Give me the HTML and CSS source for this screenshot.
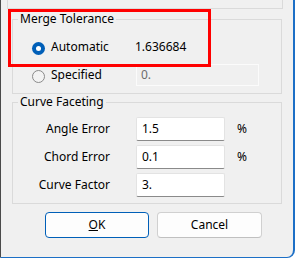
FILE: index.html
```html
<!DOCTYPE html>
<html>
<head>
<meta charset="utf-8">
<link rel="stylesheet" href="styles.css">
</head>
<body>
<div class="window">
  <div class="top-box"></div>
  <fieldset class="group merge">
    <legend>Merge Tolerance</legend>
    <div class="merge-grid">
      <div class="radio-row"><span class="radio on"></span><span>Automatic</span></div>
      <span class="value">1.636684</span>
      <div class="radio-row"><span class="radio off"></span><span>Specified</span></div>
      <div class="edit disabled">0.</div>
    </div>
  </fieldset>
  <fieldset class="group curve">
    <legend>Curve Faceting</legend>
    <div class="curve-grid">
      <span class="lbl">Angle Error</span><div class="edit">1.5</div><span class="unit">%</span>
      <span class="lbl">Chord Error</span><div class="edit">0.1</div><span class="unit">%</span>
      <span class="lbl">Curve Factor</span><div class="edit">3.</div><span class="unit"></span>
    </div>
  </fieldset>
  <div class="buttons">
    <button class="btn default"><u>O</u>K</button>
    <button class="btn">Cancel</button>
  </div>
  <div class="highlight"></div>
</div>
</body>
</html>
```
FILE: styles.css
```css
html, body {
  margin: 0;
  padding: 0;
  background: #ffffff;
}

.window {
  position: relative;
  width: 295px;
  height: 258px;
  box-sizing: border-box;
  background: #f0f0f0;
  border-left: 1px solid #4a4a4a;
  border-right: 2px solid #1c6fc6;
  border-bottom: 1px solid #1c6fc6;
  border-bottom-right-radius: 8px;
  font: 12px/16px "Noto Sans", sans-serif;
  color: #000;
  display: flex;
  flex-direction: column;
  overflow: hidden;
}

.top-box {
  margin-left: 6px;
  width: 276px;
  height: 9px;
  box-sizing: border-box;
  border: 1px solid #dadada;
  border-top: none;
  flex: none;
}

.group {
  margin: 0 0 0 11px;
  padding: 0;
  width: 270px;
  box-sizing: border-box;
  border: 1px solid #dadada;
  min-width: 0;
  flex: none;
}

.group legend {
  margin-left: 5px;
  padding: 0 2px;
  line-height: 16px;
}

.merge {
  margin-top: 2px;
}

.merge-grid {
  display: grid;
  grid-template-columns: 103px 124px;
  grid-template-rows: 24px 22px;
  row-gap: 5px;
  padding: 8px 0 7px 19px;
  align-items: center;
}

.radio-row {
  display: flex;
  align-items: center;
  gap: 6px;
}

.radio {
  width: 13px;
  height: 13px;
  box-sizing: border-box;
  border-radius: 50%;
  flex: none;
}

.radio.on {
  background: #005fb8;
  position: relative;
  margin-top: 3px;
}

.radio.on::after {
  content: "";
  position: absolute;
  left: 4px;
  top: 4px;
  width: 5px;
  height: 5px;
  border-radius: 50%;
  background: #fff;
}

.radio.off {
  border: 1px solid #8a8a8a;
  background: #f3f3f3;
  margin-top: 2px;
}

.value {
  padding-left: 0;
}

.edit {
  height: 24px;
  box-sizing: border-box;
  background: #fff;
  border: 1px solid #e3e3e3;
  border-bottom-color: #8a8a8a;
  border-radius: 2px;
  padding-left: 5px;
  line-height: 22px;
}

.edit.disabled {
  height: 22px;
  margin-left: 1px;
  background: transparent;
  border: 1px solid #fbfbfb;
  border-radius: 0;
  color: #6d6d6d;
  padding-left: 4px;
  line-height: 20px;
}

.curve-grid {
  display: grid;
  grid-template-columns: 97px 89px auto;
  grid-auto-rows: 24px;
  column-gap: 26px;
  row-gap: 4px;
  padding: 7px 0 6px 0;
  align-items: center;
}

.curve-grid .unit {
  margin-left: -14px;
}

.lbl {
  text-align: right;
}

.buttons {
  display: flex;
  gap: 8px;
  margin-top: 8px;
  padding-left: 44px;
  flex: none;
}

.btn {
  width: 105px;
  height: 26px;
  box-sizing: border-box;
  background: #fdfdfd;
  border: 1px solid #d0d0d0;
  border-bottom-color: #c0c0c0;
  border-radius: 4px;
  font: 12px/16px "Noto Sans", sans-serif;
  color: #000;
  padding: 0;
}

.btn.default {
  width: 104px;
  border-color: #005fb8;
}

.highlight {
  position: absolute;
  left: 7px;
  top: 9px;
  width: 203px;
  height: 58px;
  box-sizing: border-box;
  border: 3px solid #ff0000;
}
```
